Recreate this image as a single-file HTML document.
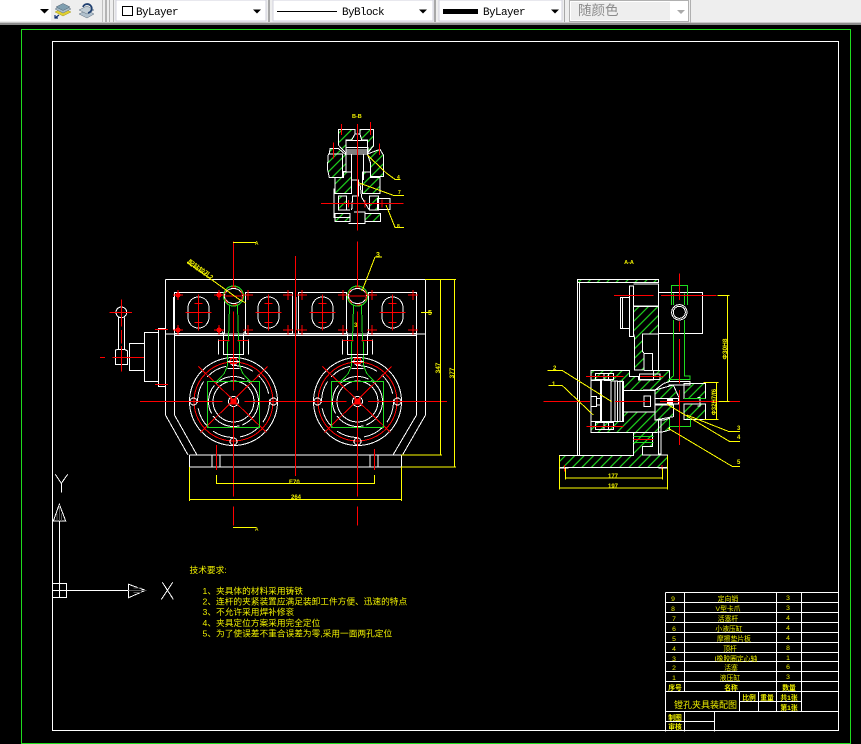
<!DOCTYPE html>
<html><head><meta charset="utf-8">
<style>
html,body{margin:0;padding:0;background:#000;width:861px;height:744px;overflow:hidden}
svg{display:block}
text{font-family:"Liberation Sans","Noto Sans CJK SC",sans-serif;fill:#f0f000;stroke:none}
.m{font-family:"Liberation Mono","Noto Sans CJK SC",monospace;fill:#000;font-size:11px;letter-spacing:-.6px}
.w{fill:none;stroke:#fff}
.r{fill:none;stroke:#f00}
.g{fill:none;stroke:#1fdc1f}
.y{fill:none;stroke:#ff0}
.h{fill:url(#hz);stroke:#fff}
</style></head><body>
<svg width="861" height="744" viewBox="0 0 861 744" xmlns="http://www.w3.org/2000/svg">
<defs>
<pattern id="hz" width="20" height="20" patternUnits="userSpaceOnUse" patternTransform="rotate(-45)">
<rect width="20" height="20" fill="#000"/><line x1="0" y1="10" x2="20" y2="10" stroke="#1fdc1f" stroke-width="3.500"/>
</pattern>
<g id="wheel" shape-rendering="crispEdges" stroke-width="1" fill="none">
<circle r="44" stroke="#fff"/><circle r="39.500" stroke="#f00"/><circle r="36" stroke="#fff" stroke-dasharray="22 6"/>
<circle r="25" stroke="#fff" stroke-dasharray="30 3"/><circle r="20.500" stroke="#fff"/><circle r="5" stroke="#fff"/>
<path d="M-35-35 33 31M34-35-33 31M-27 0H-11M11 0H27M0-27V-11M0 11V27" stroke="#f00"/>
<rect x="-26" y="-20" width="52" height="46" stroke="#1fdc1f"/>
<rect x="-2.500" y="-2.500" width="5" height="5" fill="#f00" stroke="#f00"/>
<circle cx="-40" r="3.500" stroke="#fff"/><circle cx="40" r="3.500" stroke="#fff"/><circle cy="40" r="3.500" stroke="#fff"/><circle cy="-40" r="3.500" stroke="#fff"/>
<path d="M-46 0H-34M34 0H46M0 36V45" stroke="#f00"/><rect x="-3" y="-43" width="6" height="5" stroke="#f00"/>
<path d="M-4-96-5-61-6-59V-36L-9.300-28-17-20M4-96 5-61 6-59V-36L9.300-28 17-20" stroke="#1fdc1f"/>
<path d="M-11-70-10-67V-47H10V-67L11-70M-15-62V-47M15-62V-47" stroke="#fff"/>
<path d="M-6-40H6M-6-33H6" stroke="#fff"/>
<circle cy="-105.500" r="10" stroke="#1fdc1f"/><ellipse cy="-105.500" rx="9" ry="7.500" stroke="#fff"/><circle cy="-105.500" r="9" stroke="#f00" stroke-dasharray="5 5"/>
<path d="M-15-61H-4M4-61H15M-9-105.500H9" stroke="#f00"/>
<path d="M0-160V-115M0-90V-15M0 5V95M0 105V124" stroke="#f00"/>
</g>
<g id="slot" shape-rendering="crispEdges" fill="none">
<rect x="-10.500" y="-15.500" width="21" height="31" rx="10" ry="11" stroke="#fff"/>
<path d="M-13 0H13M0-18V18M-4-9H4M-4 10H4" stroke="#f00"/>
</g>
<path id="cr" d="M-5 0H5M0-5V5" stroke="#f00" fill="none" shape-rendering="crispEdges"/>
<g id="crd"><circle r="2.500" fill="#f00"/><path d="M-5 0H5M0-5V5" stroke="#f00" fill="none" shape-rendering="crispEdges"/></g>
</defs>
<rect width="861" height="744" fill="#000"/>
<!-- toolbar -->
<g shape-rendering="crispEdges">
<rect width="861" height="24" fill="#eeeeee"/>
<rect y="22" width="861" height="1" fill="#c8c8c8"/><rect y="23" width="861" height="2" fill="#8c8c8c"/>
<rect x="0" y="0" width="51" height="21" fill="#fff"/>
<rect x="102" y="0" width="1" height="22" fill="#c0c0c0"/><rect x="105" y="0" width="2" height="22" fill="#b4b4b4"/><rect x="109" y="0" width="1" height="22" fill="#b4b4b4"/><rect x="113" y="0" width="1" height="22" fill="#b4b4b4"/>
<rect x="116" y="0" width="150" height="21" fill="#fff" stroke="#d0d0dc"/>
<rect x="268" y="0" width="2" height="22" fill="#a8a8a8"/>
<rect x="273" y="0" width="160" height="21" fill="#fff" stroke="#d0d0dc"/>
<rect x="434" y="0" width="2" height="22" fill="#a8a8a8"/>
<rect x="439" y="0" width="123" height="21" fill="#fff" stroke="#d0d0dc"/>
<rect x="564" y="0" width="1" height="22" fill="#a8a8a8"/>
<rect x="569.500" y="0.500" width="119" height="21" fill="#fff" stroke="#b0b0b0"/>
<rect x="571" y="2" width="99" height="18" fill="#eeeeee"/>
<rect x="690" y="0" width="1" height="23" fill="#b0b0b0"/>
<rect x="122.500" y="6.500" width="10" height="9" fill="#fff" stroke="#000"/>
<rect x="277" y="11" width="60" height="1" fill="#000"/>
<rect x="443" y="9" width="35" height="5" fill="#000"/>
</g>
<path d="M40 9h9l-4.500 4.500zM253 9.500h8l-4 4zM419 9.500h8l-4 4zM551 9.500h8l-4 4z" fill="#000"/>
<path d="M677 10h8l-4 4z" fill="#aaa"/>
<!-- layer icons -->
<path d="M55 12 63 8l8 4-8 4z" fill="#e0cf30" stroke="#a89a20" stroke-width=".5"/>
<path d="M55 9 63 5l8 4-8 4z" fill="#a8bcc8" stroke="#607080" stroke-width=".5"/>
<path d="M56 7 63 3.500 70 7l-7 3.500z" fill="#7f9fb0" stroke="#506070" stroke-width=".5"/>
<path d="M55 18l4-3M55 15v3h3" stroke="#103070" fill="none" stroke-width="1.200"/>
<path d="M79 14l8 4 7-4-7-4z" fill="#b0c0cc" stroke="#607080" stroke-width=".5"/>
<path d="M79 10l8 4 7-4-7-4z" fill="#c0ccd4" stroke="#607080" stroke-width=".5"/>
<path d="M83 7a4.500 4.500 0 1 1 5 6" fill="none" stroke="#204070" stroke-width="1.800"/>
<text class="m" x="136" y="15">ByLayer</text>
<text class="m" x="342" y="15">ByBlock</text>
<text class="m" x="483" y="15">ByLayer</text>
<text x="578" y="15" font-size="13.500" style="fill:#8a8a8a">随颜色</text>

<g shape-rendering="crispEdges">
<rect x="21.500" y="29.500" width="829" height="714" fill="none" stroke="#1fdc1f"/>
<rect x="52.500" y="41.500" width="786" height="689" fill="none" stroke="#fff"/>

<!-- UCS -->
<g transform="translate(0,460) scale(.33333)" stroke-width="3">
<path class="w" d="M166 43 184 70 203 43M184 70V98M178 183V370M200 391H385M487 367 520 418M518 367 484 418"/>
<rect class="w" x="157" y="370" width="43" height="43"/>
<path class="w" d="M157 391H200M178 370V413"/>
<path class="w" d="M178 133 197 183H160Z"/>
<path d="M178 135V183M171 160V183M185 160V183" stroke="#555" stroke-width="3" fill="none"/>
<path class="w" d="M386 373 436 391 386 413Z"/>
<path d="M386 391H440M400 384H425M400 398H425" stroke="#555" stroke-width="3" fill="none"/>
</g>

<!-- Main view -->
<g fill="none" stroke-width="1">
<path class="w" d="M165.500 279.500H425.500V415L402.500 455M165.500 279.500V415L188 455M174.500 334V415L197 455M416.500 334V415L393 455"/>
<path class="w" d="M165.500 334H425M174 335.500H416"/>
<path class="w" d="M189.500 455H401.500M189.500 467H401.500M189.500 455V467M401.500 455V467M212 455V467M220 455V467M370 455V467M378 455V467"/>
<rect class="w" x="174.500" y="292.500" width="50" height="41"/>
<rect class="w" x="245.500" y="292.500" width="47" height="41"/>
<rect class="w" x="298.500" y="292.500" width="48" height="41"/>
<rect class="w" x="368.500" y="292.500" width="48" height="41"/>
<path class="w" d="M292.500 297V330M296 297V330M173.500 297V330"/>
</g>
<use href="#slot" x="198.500" y="312.500"/><use href="#slot" x="268.500" y="312.500"/><use href="#slot" x="322.500" y="312.500"/><use href="#slot" x="392.500" y="312.500"/>
<use href="#wheel" x="233.500" y="401.500"/><use href="#wheel" x="357.500" y="401.500"/>
<use href="#crd" x="178" y="295"/><use href="#crd" x="219" y="295"/><use href="#crd" x="178" y="330"/><use href="#crd" x="219" y="330"/><use href="#cr" x="248" y="295"/><use href="#cr" x="288" y="295"/><use href="#cr" x="248" y="330"/><use href="#cr" x="288" y="330"/><use href="#cr" x="302" y="295"/><use href="#cr" x="343" y="295"/><use href="#cr" x="302" y="330"/><use href="#cr" x="343" y="330"/><use href="#cr" x="372" y="295"/><use href="#cr" x="413" y="295"/><use href="#cr" x="372" y="330"/><use href="#cr" x="413" y="330"/>
<g fill="none" stroke-width="1">
<path class="r" d="M140 401.500H222M245 401.500H345M368 401.500H447M295.500 256V476M216.500 445V470M374.500 449V470"/>
<!-- handle -->
<g transform="translate(100,240) scale(.33333)" stroke-width="3">
<circle class="w" cx="64" cy="217" r="16"/>
<path class="w" d="M55 232V328M73 232V328M46 374V330L55 328 73 328 83 333V374ZM88 310H133V392H88ZM133 277H175V425H133ZM175 265H196V440H175Z"/>
<path class="r" d="M28 217H96M64 178V260M64 270V310M64 318V395M0 352H15M37 352H132M165 268H204M165 434H204"/>
</g>
<!-- yellow dims -->
<path class="y" d="M425 279.500H456M401 455H442M401 467H456M440.500 280V455M454.500 280V467M216.500 475V484M216.500 483.500H374.500M374.500 475V484M189.500 467V501M189.500 499.500H401.500M401.500 467V501"/>
<path class="y" d="M233 242.500H256M233 527.500H256M421 312.500H432M187 262 240 300M240 300 246 303M375 257H382M375 257 362 291"/>
</g>
<text x="289" y="484" font-size="6" font-weight="700">E70</text>
<text x="291" y="499" font-size="6" font-weight="700">264</text>
<text transform="translate(440,368) rotate(-90)" text-anchor="middle" font-size="6.500" font-weight="700">347</text>
<text transform="translate(454,373) rotate(-90)" text-anchor="middle" font-size="6.500" font-weight="700">377</text>
<text x="255" y="245" font-size="5">A</text><text x="255" y="531" font-size="5">A</text>
<text x="376" y="257" font-size="7" font-weight="700">3</text>
<text x="428" y="315" font-size="7" font-weight="700">5</text>
<text x="354" y="327" font-size="6" font-weight="700">3</text>
<text transform="translate(187,263) rotate(35)" font-size="6.500" font-weight="700">配钻铰孔2</text>

<!-- Section B-B -->
<g transform="translate(310,110) scale(.33333)" stroke-width="3">
<polygon class="h" points="85,58 135,58 135,72 125,90 108,90 108,130 85,105"/>
<polygon class="h" points="150,58 190,58 190,108 172,130 172,90 155,90 150,72"/>
<polygon class="h" points="60,115 85,115 108,135 108,185 98,185 98,132 58,132"/>
<polygon class="h" points="55,132 98,132 98,203 58,203 52,175"/>
<polygon class="h" points="172,132 210,118 220,135 220,200 182,200 182,160"/>
<polygon class="h" points="100,186 125,186 125,250 75,250 75,203 100,203"/>
<polygon class="h" points="157,186 182,186 182,203 210,203 210,250 157,250"/>
<polygon class="h" points="85,258 110,258 110,300 85,300"/>
<polygon class="h" points="178,258 205,258 205,300 178,300"/>
<polygon class="h" points="75,310 120,310 120,335 75,335"/>
<polygon class="h" points="165,310 212,310 212,335 165,335"/>
<path class="w" d="M108 92H172M108 112H174V132H108ZM108 120H174M108 126H174M125 132V210M160 132V210M125 210H145V258H128L125 300M72 235V322H120M120 300H85M132 306H165V340H115M202 265H240V298H202ZM150 222 155 262 178 300M135 72H150"/>
<path class="r" d="M142 42V362M94 42V75M181 36V75M70 97V145M208 100V135M33 280H280M115 270V292M165 270V292M216 268V292"/>
<path class="y" d="M172 135 230 190 255 208H272M145 218 250 256H282M228 285 255 352H282"/>
</g>
<text x="352" y="118" font-size="5.500" font-weight="700">B-B</text>
<text x="397" y="179" font-size="5" font-weight="700">4</text>
<text x="398" y="194" font-size="5" font-weight="700">7</text>
<text x="397" y="228" font-size="5" font-weight="700">8</text>

<!-- Right view A-A -->
<g transform="translate(540,250) scale(.33333)" stroke-width="3">
<polygon class="h" points="112,88 356,88 356,97 119,97 112,97"/>
<path class="w" d="M112 88V615M119 97V615"/>
<path class="w" d="M268 108H280V260H268ZM280 102H356V362M280 168H356M242 142H268V236H242ZM248 142V236M356 127H488V250H356ZM312 310H338V362H312"/>
<polygon class="h" points="280,170 356,170 356,252 308,252 308,305 312,310 312,360 283,360 283,260 280,250"/>
<polygon class="h" points="153,362 268,362 268,380 296,380 296,390 340,390 340,362 388,362 388,395 372,400 345,420 250,422 250,395 182,390 153,390"/>
<polygon class="h" points="250,486 345,486 345,510 372,510 388,505 388,540 372,545 338,548 153,548 153,515 250,515"/>
<polygon class="h" points="345,465 400,465 400,500 345,510"/>
<polygon class="h" points="432,400 497,400 497,445 432,445"/>
<polygon class="h" points="432,462 497,462 497,508 432,508"/>
<polygon class="h" points="58,616 280,616 280,548 338,548 338,590 308,590 308,615 383,615 383,652 58,652"/>
<polygon class="h" points="345,420 400,405 418,445 345,445" />
<rect x="153" y="392" width="32" height="123" fill="#000" stroke="#fff"/>
<path class="w" d="M182 392V515M213 392V515M225 392V515M232 392V515M240 392V515M247 392V515M155 440H170V470H155M170 445H183V465H170M166 370H220V388H166ZM192 370V388M206 370V388M166 518H220V538H166ZM192 518V538M206 518V538M298 372H360V388H298ZM355 505V612H363V505M280 560H338"/>
<rect x="250" y="422" width="95" height="64" fill="#000" stroke="#fff"/>
<path class="w" d="M312 438H332V470H312ZM345 445H415V462H345M472 443H480V468H472M385 395H450V405H385"/>
<rect x="381" y="445" width="18" height="17" fill="#fff"/>
<circle class="w" cx="418" cy="187" r="23"/><circle class="w" cx="418" cy="187" r="18"/>
<path class="g" d="M394 165V106H443V165M400 210 400 378 388 388H450V378L433 378 433 210M400 130V165M433 130V165M388 508V530H452V508M280 560H340M280 578H340M432 445H497"/>
<path class="r" d="M418 70V150M418 215V245M418 267V400M418 420V585M222 136H340M363 136H530M10 454H150M225 454H330M360 454H600M138 379H250M300 379H370M140 529H250M280 569H340M74 645V665M366 645V660"/>
<path class="y" d="M22 361H66L215 455M25 406H66L160 495M440 495 565 544H600M380 462 568 574H600M385 535 578 650H600"/>
<path class="y" d="M532 136H568M562 136V454M535 454H568M490 397H535M530 397V508M490 508H535M58 616V718M383 616V718M76 655V688M368 655V688M76 684H368M60 714H382"/>
<path class="w" d="M58 654H85M355 654H383"/>
</g>
<text x="629" y="264" font-size="5.500" text-anchor="middle" font-weight="700">A-A</text>
<text x="553" y="370" font-size="6" font-weight="700">2</text>
<text x="552" y="386" font-size="6" font-weight="700">1</text>
<text x="737" y="430" font-size="6" font-weight="700">3</text>
<text x="737" y="439" font-size="6" font-weight="700">4</text>
<text x="737" y="464" font-size="6" font-weight="700">5</text>
<text x="608" y="478" font-size="6" font-weight="700">177</text>
<text x="608" y="488" font-size="6" font-weight="700">197</text>
<text transform="translate(727,349) rotate(-90)" font-size="6.500" font-weight="700" text-anchor="middle">Φ30H8</text>
<text transform="translate(716,402) rotate(-90)" font-size="6" font-weight="700" text-anchor="middle">Φ32H7/f6</text>

<!-- Title table -->
<g transform="translate(660,585) scale(.33333)" stroke-width="3" class="w">
<path class="w" d="M16 22H535M16 52H535M16 82H535M16 112H535M16 142H535M16 172H535M16 202H535M16 230H535M16 260H535M16 290H535M16 320H535M238 350H424M16 380H535M16 410H163M16 22V440M73 22V320M73 380V440M163 380V440M349 22V380M424 22V380M238 320V380M295 320V380"/>
</g>
</g>
<g font-size="6.800" text-anchor="middle">
<text x="673" y="601">9</text><text x="728" y="601">定向销</text><text x="788" y="600">3</text>
<text x="673" y="611">8</text><text x="728" y="611">V型卡爪</text><text x="788" y="610">3</text>
<text x="674" y="621">7</text><text x="728" y="621">活塞杆</text><text x="788" y="620">4</text>
<text x="674" y="631">6</text><text x="729" y="631">小液压缸</text><text x="788" y="630">4</text>
<text x="674" y="641">5</text><text x="734" y="641">摩擦垫片板</text><text x="788" y="640">4</text>
<text x="674" y="651">4</text><text x="730" y="651">顶杆</text><text x="788" y="650">8</text>
<text x="674" y="661">3</text><text x="736" y="661">I橡胶圈定心轴</text><text x="788" y="660">1</text>
<text x="674" y="670">2</text><text x="731" y="670">活塞</text><text x="788" y="669">6</text>
<text x="674" y="680">1</text><text x="730" y="680">液压缸</text><text x="788" y="679">3</text>
<g font-weight="700"><text x="675" y="690">序号</text><text x="731" y="690">名称</text><text x="789" y="690">数量</text>
<text x="749" y="700">比例</text><text x="767" y="700">重量</text><text x="789" y="700">共1张</text><text x="789" y="710">第1张</text>
<text x="675" y="720">制图</text><text x="675" y="729">审核</text></g>
</g>
<text x="674" y="708" font-size="9">镗孔夹具装配图</text>

<!-- Tech notes -->
<g font-size="8.700">
<text x="189.500" y="573">技术要求:</text>
<text x="202.500" y="594">1、夹具体的材料采用铸铁</text>
<text x="202.500" y="604.500">2、连杆的夹紧装置应满足装卸工件方便、迅速的特点</text>
<text x="202.500" y="615">3、不允许采用焊补修衮</text>
<text x="202.500" y="626">4、夹具定位方案采用完全定位</text>
<text x="202.500" y="636.500">5、为了使误差不重合误差为零,采用一面两孔定位</text>
</g>
</svg>
</body></html>
